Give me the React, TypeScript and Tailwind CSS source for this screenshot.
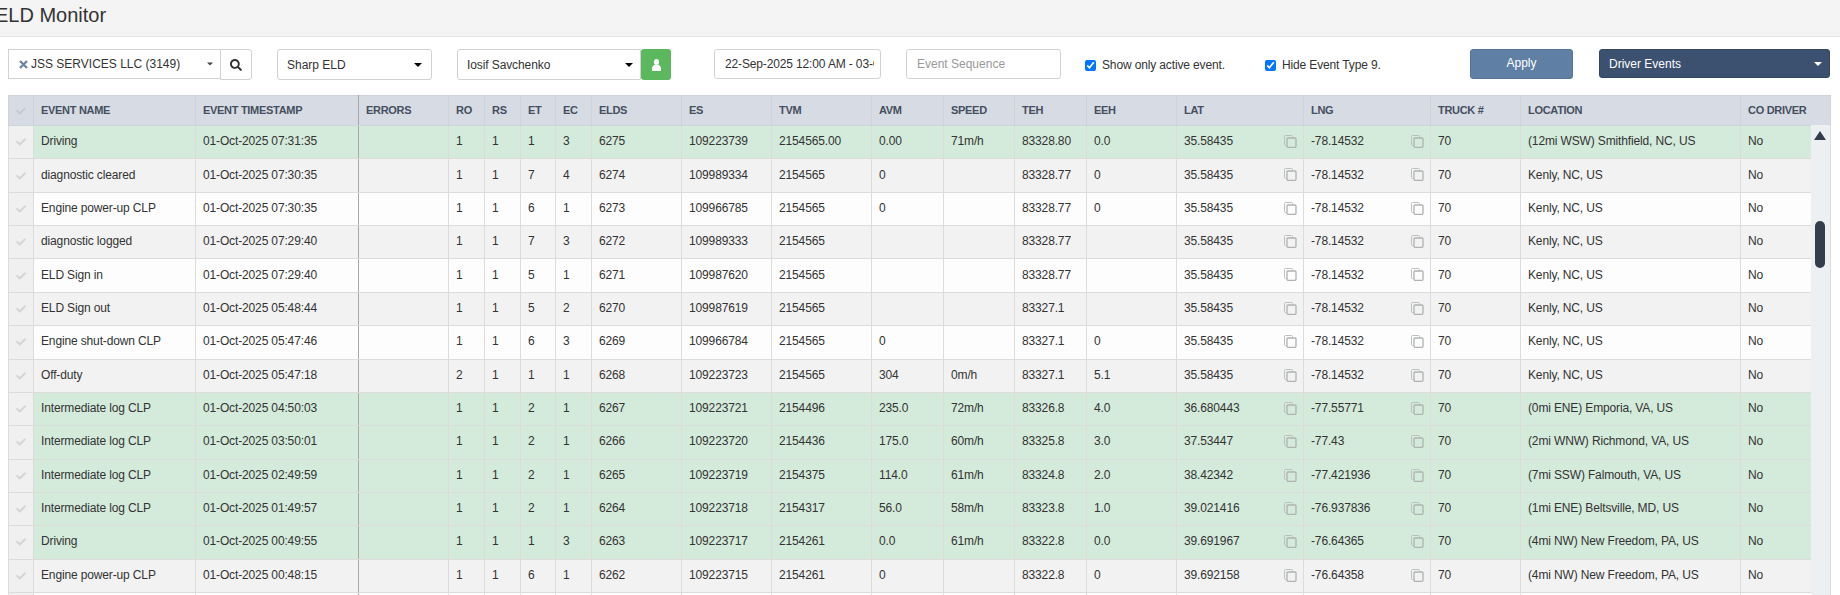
import React from "react";
import { FaSearch, FaCheck } from "react-icons/fa";

const cols = [25, 162, 163, 90, 36, 36, 35, 36, 90, 90, 100, 72, 71, 72, 90, 127, 127, 90, 220, 90];
const headers = ["", "EVENT NAME", "EVENT TIMESTAMP", "ERRORS", "RO", "RS", "ET", "EC", "ELDS", "ES", "TVM", "AVM", "SPEED", "TEH", "EEH", "LAT", "LNG", "TRUCK #", "LOCATION", "CO DRIVER"];

type Row = { g?: boolean; c: string[] };
const rows: Row[] = [
  { g: true, c: ["Driving", "01-Oct-2025 07:31:35", "", "1", "1", "1", "3", "6275", "109223739", "2154565.00", "0.00", "71m/h", "83328.80", "0.0", "35.58435", "-78.14532", "70", "(12mi WSW) Smithfield, NC, US", "No"] },
  { c: ["diagnostic cleared", "01-Oct-2025 07:30:35", "", "1", "1", "7", "4", "6274", "109989334", "2154565", "0", "", "83328.77", "0", "35.58435", "-78.14532", "70", "Kenly, NC, US", "No"] },
  { c: ["Engine power-up CLP", "01-Oct-2025 07:30:35", "", "1", "1", "6", "1", "6273", "109966785", "2154565", "0", "", "83328.77", "0", "35.58435", "-78.14532", "70", "Kenly, NC, US", "No"] },
  { c: ["diagnostic logged", "01-Oct-2025 07:29:40", "", "1", "1", "7", "3", "6272", "109989333", "2154565", "", "", "83328.77", "", "35.58435", "-78.14532", "70", "Kenly, NC, US", "No"] },
  { c: ["ELD Sign in", "01-Oct-2025 07:29:40", "", "1", "1", "5", "1", "6271", "109987620", "2154565", "", "", "83328.77", "", "35.58435", "-78.14532", "70", "Kenly, NC, US", "No"] },
  { c: ["ELD Sign out", "01-Oct-2025 05:48:44", "", "1", "1", "5", "2", "6270", "109987619", "2154565", "", "", "83327.1", "", "35.58435", "-78.14532", "70", "Kenly, NC, US", "No"] },
  { c: ["Engine shut-down CLP", "01-Oct-2025 05:47:46", "", "1", "1", "6", "3", "6269", "109966784", "2154565", "0", "", "83327.1", "0", "35.58435", "-78.14532", "70", "Kenly, NC, US", "No"] },
  { c: ["Off-duty", "01-Oct-2025 05:47:18", "", "2", "1", "1", "1", "6268", "109223723", "2154565", "304", "0m/h", "83327.1", "5.1", "35.58435", "-78.14532", "70", "Kenly, NC, US", "No"] },
  { g: true, c: ["Intermediate log CLP", "01-Oct-2025 04:50:03", "", "1", "1", "2", "1", "6267", "109223721", "2154496", "235.0", "72m/h", "83326.8", "4.0", "36.680443", "-77.55771", "70", "(0mi ENE) Emporia, VA, US", "No"] },
  { g: true, c: ["Intermediate log CLP", "01-Oct-2025 03:50:01", "", "1", "1", "2", "1", "6266", "109223720", "2154436", "175.0", "60m/h", "83325.8", "3.0", "37.53447", "-77.43", "70", "(2mi WNW) Richmond, VA, US", "No"] },
  { g: true, c: ["Intermediate log CLP", "01-Oct-2025 02:49:59", "", "1", "1", "2", "1", "6265", "109223719", "2154375", "114.0", "61m/h", "83324.8", "2.0", "38.42342", "-77.421936", "70", "(7mi SSW) Falmouth, VA, US", "No"] },
  { g: true, c: ["Intermediate log CLP", "01-Oct-2025 01:49:57", "", "1", "1", "2", "1", "6264", "109223718", "2154317", "56.0", "58m/h", "83323.8", "1.0", "39.021416", "-76.937836", "70", "(1mi ENE) Beltsville, MD, US", "No"] },
  { g: true, c: ["Driving", "01-Oct-2025 00:49:55", "", "1", "1", "1", "3", "6263", "109223717", "2154261", "0.0", "61m/h", "83322.8", "0.0", "39.691967", "-76.64365", "70", "(4mi NW) New Freedom, PA, US", "No"] },
  { c: ["Engine power-up CLP", "01-Oct-2025 00:48:15", "", "1", "1", "6", "1", "6262", "109223715", "2154261", "0", "", "83322.8", "0", "39.692158", "-76.64358", "70", "(4mi NW) New Freedom, PA, US", "No"] },
  { c: ["", "", "", "", "", "", "", "", "", "", "", "", "", "", "", "", "", "", ""] },
];

function CopyIcon() {
  return (
    <svg width="13" height="13" viewBox="0 0 13 13" fill="none" className="absolute right-[6px] top-[9px]">
      <path d="M2.5 10.5H1.5a1 1 0 0 1-1-1V1.5a1 1 0 0 1 1-1h6a1 1 0 0 1 1 1V2.5" stroke="#bcc0be" />
      <rect x="3" y="3" width="9" height="9.3" rx="1" stroke="#aeb2b0" strokeWidth="1.3" />
    </svg>
  );
}

function Caret({ className }: { className?: string }) {
  return <span className={`w-0 h-0 border-x-[4px] border-x-transparent border-t-[4px] ${className ?? "border-t-black"}`} />;
}

const box = "bg-white border border-[#d2d2d2] rounded-[3px] text-[12px] text-[#333]";

export default function App() {
  return (
    <div className="w-[1840px] h-[595px] overflow-hidden bg-white font-['Liberation_Sans',Arial,sans-serif] text-[#333]">
      <header className="h-[37px] bg-[#f4f4f4] border-b border-[#e3e6ea] flex items-start">
        <h1 className="ml-[-5px] mt-[3px] text-[20px] leading-[24px] font-normal text-[#333]">ELD Monitor</h1>
      </header>

      <div className="flex items-start h-[58px] pt-[12px]">
        <div className="ml-[8px] flex w-[244px]">
          <div className="flex-1 h-[30px] bg-white border border-[#d2d2d2] border-r-0 flex items-center text-[12px] pl-[10px] pr-[6px] whitespace-nowrap">
            <svg width="9" height="9" viewBox="0 0 9 9" className="mr-[3px] shrink-0" stroke="#6f86a8" strokeWidth="2.4">
              <path d="M1 1l7 7M8 1L1 8" />
            </svg>
            <span>JSS SERVICES LLC (3149)</span>
            <Caret className="ml-auto border-t-[#444] scale-75" />
          </div>
          <button className="w-[32px] h-[31px] bg-white border border-[#d2d2d2] rounded-r-[3px] flex items-center justify-center text-[#333]">
            <FaSearch className="w-[12px] h-[12px]" />
          </button>
        </div>

        <div className={`${box} ml-[25px] w-[155px] h-[31px] pl-[9px] pr-[9px] flex items-center justify-between`}>
          <span>Sharp ELD</span>
          <Caret />
        </div>

        <div className={`${box} ml-[25px] w-[184px] h-[31px] pl-[9px] pr-[7px] flex items-center justify-between rounded-r-none tracking-[-0.1px]`}>
          <span>Iosif Savchenko</span>
          <Caret />
        </div>
        <button className="w-[30px] h-[31px] bg-[#5cb85c] rounded-[3px] flex items-center justify-center">
          <svg width="9" height="12" viewBox="0 0 9 12" fill="#fff">
            <ellipse cx="4.5" cy="3" rx="2.6" ry="3" />
            <path d="M0 12V9.3C0 7.4 1.6 6.2 2.6 5.8h3.8C7.4 6.2 9 7.4 9 9.3V12z" />
          </svg>
        </button>

        <input
          readOnly
          value="22-Sep-2025 12:00 AM - 03-Oct-2025 11:59 PM"
          className={`${box} ml-[43px] w-[167px] h-[30px] pl-[10px] pr-[6px] outline-none tracking-[-0.14px]`}
        />

        <input
          readOnly
          placeholder="Event Sequence"
          className={`${box} ml-[25px] w-[155px] h-[30px] px-[10px] outline-none placeholder:text-[#999]`}
        />

        <label className="ml-[24px] mt-[9px] w-[180px] flex items-center text-[12px] leading-[14px] tracking-[-0.14px]">
          <input type="checkbox" defaultChecked className="w-[11px] h-[11px] mr-[6px] m-0 accent-[#0075ff]" />
          Show only active event.
        </label>

        <label className="mt-[9px] w-[205px] flex items-center text-[12px] leading-[14px] tracking-[-0.14px]">
          <input type="checkbox" defaultChecked className="w-[11px] h-[11px] mr-[6px] m-0 accent-[#0075ff]" />
          Hide Event Type 9.
        </label>

        <button className="w-[103px] h-[30px] bg-[#5f7fa5] border border-[#54749a] rounded-[3px] text-white text-[12px] pb-[2px]">Apply</button>

        <div className="ml-[26px] w-[231px] h-[29px] bg-[#3c506f] border border-[#34465f] rounded-[3px] flex items-center justify-between pl-[9px] pr-[7px] text-white text-[12px]">
          <span>Driver Events</span>
          <Caret className="border-t-white" />
        </div>
      </div>

      <div className="relative ml-[8px] w-[1822px]">
        <table className="table-fixed border-collapse w-[1822px] text-[12px] tracking-[-0.14px]">
          <colgroup>
            {cols.map((w, i) => (
              <col key={i} style={{ width: w }} />
            ))}
          </colgroup>
          <thead>
            <tr className="h-[30px] bg-[#d7dbe4]">
              {headers.map((h, i) => (
                <th
                  key={i}
                  className={`text-left font-bold text-[11px] tracking-[-0.3px] text-[#454f5f] px-[7px] py-0 border border-[#cfd3da] ${i === 2 ? "border-r-[#a8a8a8]" : ""}`}
                >
                  {i === 0 ? <FaCheck className="w-[10px] h-[10px] text-[#c6cad1]" /> : h}
                </th>
              ))}
            </tr>
          </thead>
          <tbody>
            {rows.map((r, ri) => {
              const bg = r.g ? "bg-[#d4ebdb]" : ri % 2 === 1 ? "bg-[#f2f2f2]" : "bg-[#fdfdfd]";
              return (
                <tr key={ri} className="h-[33.36px]">
                  <td className="bg-[#f0f0f0] border border-[#dcdcdc] px-[7px]">
                    {ri < 14 && <FaCheck className="w-[10px] h-[10px] text-[#d4d4d4]" />}
                  </td>
                  {r.c.map((v, i) => (
                    <td
                      key={i}
                      className={`${bg} relative border border-[#dcdcdc] pl-[7px] pr-[8px] pb-[2px] whitespace-nowrap text-[#333] ${i === 1 ? "border-r-[#a8a8a8]" : ""}`}
                    >
                      {v}
                      {(i === 14 || i === 15) && ri < 14 && <CopyIcon />}
                    </td>
                  ))}
                </tr>
              );
            })}
          </tbody>
        </table>

        <div className="absolute right-0 top-[30px] bottom-0 w-[19px] bg-[#ecf0f3]">
          <span className="absolute left-[3px] top-[6px] w-0 h-0 border-x-[6px] border-x-transparent border-b-[9px] border-b-[#343d4c]" />
          <span className="absolute left-[4px] top-[96px] w-[10px] h-[47px] rounded-[5px] bg-[#343d4c]" />
        </div>
      </div>
    </div>
  );
}
